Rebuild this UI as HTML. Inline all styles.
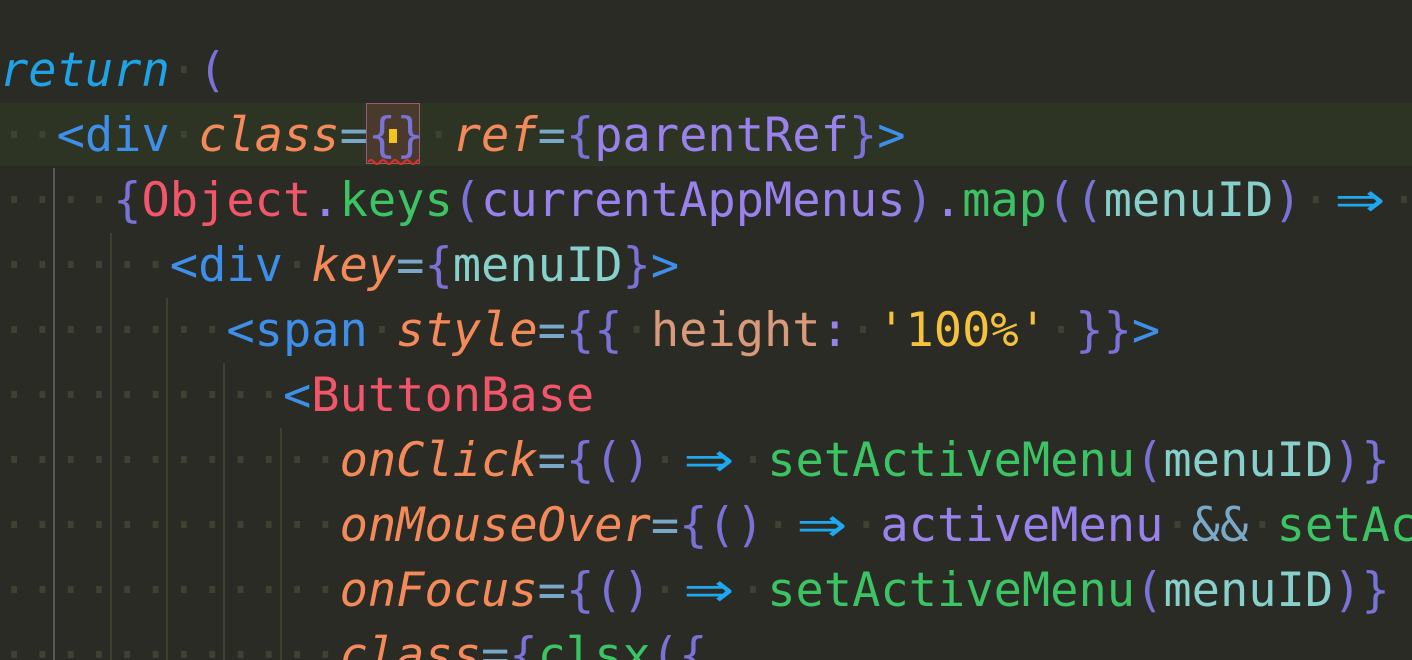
<!DOCTYPE html>
<html><head><meta charset="utf-8"><style>
html,body{margin:0;padding:0;width:1412px;height:660px;overflow:hidden;background:#2a2b24;position:relative;}
.hl{position:absolute;left:0;top:103px;width:1412px;height:63px;background:#2e3424;}
.g{position:absolute;width:2px;}
pre{position:absolute;left:0;top:38px;width:1412px;height:622px;overflow:hidden;margin:0;font-family:"DejaVu Sans Mono","Liberation Mono",monospace;font-size:47px;line-height:65px;color:#c8c8c8;white-space:pre;}
.d{color:#3f4232;}
.kw{color:#1ea4e6;font-style:italic;}
.p{color:#7a72d6;}
.t{color:#3d8fea;}
.a{color:#f48a5a;font-style:italic;}
.e{color:#7aa8c8;}
.r{color:#f2566a;}
.gr{color:#3cc464;}
.v{color:#9a82ec;}
.m{color:#88d0cc;}
.y{color:#f4c23c;}
.tn{color:#d89a7a;}
.ar{display:inline-block;width:2ch;text-align:center;color:#1ea8f0;font-family:"DejaVu Sans",sans-serif;transform:scaleX(1.3);}
.box{position:absolute;left:366px;top:103px;width:54px;height:61px;background:#4a3a2c;border:1px solid #9a5a7c;box-sizing:border-box;}
.cur{position:absolute;left:389px;top:129px;width:8px;height:14px;background:#f0c418;}
.sq{position:absolute;left:368px;top:157px;}
</style></head><body>
<div class="hl"></div>
<div class="box"></div>
<div class="cur"></div>
<svg class="sq" width="52" height="8"><path d="M0 5 Q3 1 6 5 T12 5 T18 5 T24 5 T30 5 T36 5 T42 5 T48 5 T54 5" stroke="#e0302a" stroke-width="2" fill="none"/></svg>
<div class="g" style="left:53px;top:168px;height:500px;background:#55585a"></div>
<div class="g" style="left:110px;top:233px;height:430px;background:#3d4230"></div>
<div class="g" style="left:166px;top:298px;height:370px;background:#3d4230"></div>
<div class="g" style="left:223px;top:363px;height:300px;background:#3d4230"></div>
<div class="g" style="left:280px;top:428px;height:240px;background:#3d4230"></div>
<pre><span class="kw">return</span><span class="d">·</span><span class="p">(</span>
<span class="d">··</span><span class="t">&lt;div</span><span class="d">·</span><span class="a">class</span><span class="e">=</span><span class="p">{}</span><span class="d">·</span><span class="a">ref</span><span class="e">=</span><span class="p">{</span><span class="v">parentRef</span><span class="p">}</span><span class="t">&gt;</span>
<span class="d">····</span><span class="p">{</span><span class="r">Object</span><span class="v">.</span><span class="gr">keys</span><span class="p">(</span><span class="v">currentAppMenus</span><span class="p">)</span><span class="v">.</span><span class="gr">map</span><span class="p">((</span><span class="m">menuID</span><span class="p">)</span><span class="d">·</span><span class="ar">⇒</span><span class="d">·</span>
<span class="d">······</span><span class="t">&lt;div</span><span class="d">·</span><span class="a">key</span><span class="e">=</span><span class="p">{</span><span class="m">menuID</span><span class="p">}</span><span class="t">&gt;</span>
<span class="d">········</span><span class="t">&lt;span</span><span class="d">·</span><span class="a">style</span><span class="e">=</span><span class="p">{{</span><span class="d">·</span><span class="tn">height</span><span class="v">:</span><span class="d">·</span><span class="y">'100%'</span><span class="d">·</span><span class="p">}}</span><span class="t">&gt;</span>
<span class="d">··········</span><span class="t">&lt;</span><span class="r">ButtonBase</span>
<span class="d">············</span><span class="a">onClick</span><span class="e">=</span><span class="p">{()</span><span class="d">·</span><span class="ar">⇒</span><span class="d">·</span><span class="gr">setActiveMenu</span><span class="p">(</span><span class="m">menuID</span><span class="p">)}</span>
<span class="d">············</span><span class="a">onMouseOver</span><span class="e">=</span><span class="p">{()</span><span class="d">·</span><span class="ar">⇒</span><span class="d">·</span><span class="v">activeMenu</span><span class="d">·</span><span class="e">&amp;&amp;</span><span class="d">·</span><span class="gr">setAc</span>
<span class="d">············</span><span class="a">onFocus</span><span class="e">=</span><span class="p">{()</span><span class="d">·</span><span class="ar">⇒</span><span class="d">·</span><span class="gr">setActiveMenu</span><span class="p">(</span><span class="m">menuID</span><span class="p">)}</span>
<span class="d">············</span><span class="a">class</span><span class="e">=</span><span class="p">{</span><span class="gr">clsx</span><span class="p">({</span>
</pre>
</body></html>
